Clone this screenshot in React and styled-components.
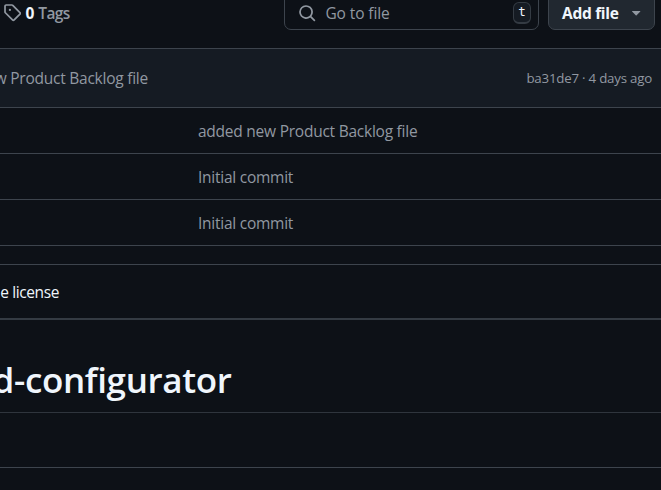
import React from "react";
import styled, { createGlobalStyle } from "styled-components";

const GlobalStyle = createGlobalStyle`
  * { box-sizing: border-box; }
  body {
    margin: 0;
    background: #0d1117;
    color: #f0f6fc;
    font-family: "Open Sans", "Noto Sans", sans-serif;
    font-size: 15.5px;
    overflow: hidden;
  }
`;

const Page = styled.div`
  width: 661px;
  height: 490px;
  overflow: hidden;
  background: #0d1117;
`;

const Text = styled.span`
  white-space: nowrap;
  line-height: 24px;
  color: ${(p) => p.$color || "#9198a1"};
  font-size: ${(p) => p.$size || 15.5}px;
  font-weight: ${(p) => p.$weight || 400};
  letter-spacing: ${(p) => p.$track || 0}px;
`;

const Toolbar = styled.div`
  display: flex;
  height: 48px;
  align-items: flex-start;
`;

const TagsLink = styled.div`
  display: flex;
  align-items: center;
  height: 25px;
  padding-left: 3px;
  width: 284px;
  flex: none;
  svg { margin-right: 4px; }
`;

const TagsLabel = styled.div`
  display: flex;
  gap: 4px;
`;

const SearchBox = styled.div`
  display: flex;
  align-items: center;
  flex: none;
  width: 255px;
  height: 37px;
  margin-top: -7px;
  padding: 2px 7px 0 13px;
  border: 1px solid #3d444d;
  border-radius: 7px;
  svg { margin: 1px 9px 0 0; }
`;

const KeyHint = styled.kbd`
  display: flex;
  align-items: center;
  justify-content: center;
  width: 18px;
  height: 22px;
  margin-left: auto;
  border: 1px solid #343b43;
  border-bottom-width: 2px;
  border-radius: 6px;
  background: #151b23;
  color: #f0f6fc;
  font: 12.5px/16px "DejaVu Sans Mono", monospace;
`;

const AddButton = styled.button`
  display: flex;
  align-items: center;
  flex: none;
  width: 107px;
  height: 37px;
  margin: -7px 0 0 9px;
  padding: 2px 9px 0 13px;
  border: 1px solid #3d444d;
  border-radius: 7px;
  background: #212830;
  font-family: inherit;
  svg { margin-left: auto; }
`;

const CommitBar = styled.div`
  display: flex;
  align-items: center;
  justify-content: space-between;
  height: 60px;
  padding: 0 9px 0 0;
  border: solid #3d444d;
  border-width: 1px 0;
  background: #151b23;
`;

const CommitMessage = styled.div`
  display: flex;
  justify-content: flex-end;
  width: 148px;
`;

const FileRow = styled.div`
  display: flex;
  align-items: center;
  height: 46px;
  padding-left: 198px;
  padding-top: 1px;
  border-bottom: 1px solid #3d444d;
`;

const LicenseBar = styled.div`
  display: flex;
  align-items: center;
  height: 56px;
  margin-top: 18px;
  border-top: 1px solid #3d444d;
  border-bottom: 2px solid #343b43;
  padding-top: 1px;
`;

const LicenseLabel = styled.div`
  display: flex;
  justify-content: flex-end;
  width: 59px;
`;

const TitleRow = styled.div`
  height: 93px;
  padding-top: 37px;
  border-bottom: 1px solid #2f353d;
`;

const Title = styled.h1`
  display: flex;
  justify-content: flex-end;
  width: 231.5px;
  margin: 0;
  color: #f0f6fc;
  font-size: 35px;
  font-weight: 630;
  line-height: 46px;
  letter-spacing: -0.35px;
  white-space: nowrap;
`;

const ReadmeEnd = styled.div`
  height: 55px;
  border-bottom: 1px solid #3d444d;
`;

const paths = {
  tag: "M1 7.775V2.75C1 1.784 1.784 1 2.75 1h5.025c.464 0 .91.184 1.238.513l6.25 6.25a1.75 1.75 0 0 1 0 2.474l-5.026 5.026a1.75 1.75 0 0 1-2.474 0l-6.25-6.25A1.752 1.752 0 0 1 1 7.775Zm1.5 0c0 .066.026.13.073.177l6.25 6.25a.25.25 0 0 0 .354 0l5.025-5.025a.25.25 0 0 0 0-.354l-6.25-6.25a.25.25 0 0 0-.177-.073H2.75a.25.25 0 0 0-.25.25ZM6 5a1 1 0 1 1 0 2 1 1 0 0 1 0-2Z",
  search: "M10.68 11.74a6 6 0 0 1-7.922-8.982 6 6 0 0 1 8.982 7.922l3.04 3.04a.749.749 0 0 1-.326 1.275.749.749 0 0 1-.734-.215ZM11.5 7a4.499 4.499 0 1 0-8.997 0A4.499 4.499 0 0 0 11.5 7Z",
  caret: "m4.427 7.427 3.396 3.396a.25.25 0 0 0 .354 0l3.396-3.396A.25.25 0 0 0 11.396 7H4.604a.25.25 0 0 0-.177.427Z",
};

const IconSvg = styled.svg`
  flex: none;
  display: block;
  fill: #9198a1;
`;

function Icon({ name }) {
  return (
    <IconSvg width="18.4" height="18.4" viewBox="0 0 16 16" aria-hidden="true">
      <path d={paths[name]} />
    </IconSvg>
  );
}

const files = [
  { message: "added new Product Backlog file", track: -0.24 },
  { message: "Initial commit", track: -0.25 },
  { message: "Initial commit", track: -0.25 },
];

export default function App() {
  return (
    <Page>
      <GlobalStyle />
      <Toolbar>
        <TagsLink>
          <Icon name="tag" />
          <TagsLabel>
            <Text $color="#f0f6fc" $weight={700}>0</Text>
            <Text $weight={600} $track={-0.6}>Tags</Text>
          </TagsLabel>
        </TagsLink>
        <SearchBox>
          <Icon name="search" />
          <Text $track={-0.1}>Go to file</Text>
          <KeyHint>t</KeyHint>
        </SearchBox>
        <AddButton>
          <Text $color="#f0f6fc" $weight={700} $track={-0.3}>Add file</Text>
          <Icon name="caret" />
        </AddButton>
      </Toolbar>
      <CommitBar>
        <CommitMessage>
          <Text $track={-0.24}>w Product Backlog file</Text>
        </CommitMessage>
        <Text $size={13.3} $track={-0.22}>ba31de7 · 4 days ago</Text>
      </CommitBar>
      {files.map((f, i) => (
        <FileRow key={i}>
          <Text $track={f.track}>{f.message}</Text>
        </FileRow>
      ))}
      <LicenseBar>
        <LicenseLabel>
          <Text $color="#f0f6fc" $track={-0.4}>e license</Text>
        </LicenseLabel>
      </LicenseBar>
      <TitleRow>
        <Title>d-configurator</Title>
      </TitleRow>
      <ReadmeEnd />
    </Page>
  );
}
